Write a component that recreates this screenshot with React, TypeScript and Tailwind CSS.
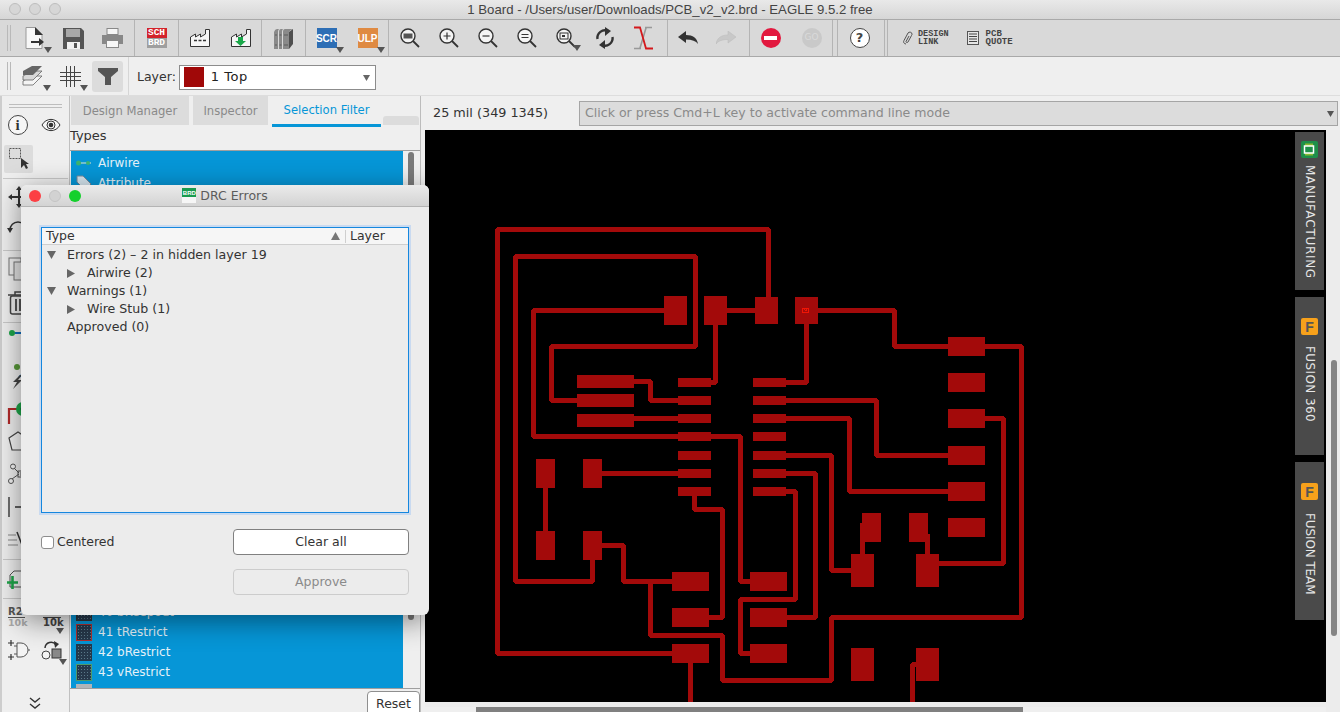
import React from "react";

const RED = "#a30a0a";
const wires = [
  "768.5,297 768.5,229.5 497.5,229.5 497.5,653.5 672,653.5",
  "577,400.5 551.5,400.5 551.5,346.5 695.5,346.5 695.5,256.5 515.5,256.5 515.5,581.5 592.5,581.5 592.5,560",
  "664,310.5 533.5,310.5 533.5,436.5 740.5,436.5 740.5,581.5 750,581.5",
  "727,310.5 755,310.5",
  "715.5,325 715.5,382.5 711,382.5",
  "818,310.5 894.5,310.5 894.5,346.5 1021.5,346.5 1021.5,617.5 831.5,617.5 831.5,680.5 722.5,680.5 722.5,635.5 650.5,635.5 650.5,581.5",
  "806.5,324 806.5,382.5 786,382.5",
  "786,400.5 876.5,400.5 876.5,455.5 948,455.5",
  "786,418.5 849.5,418.5 849.5,491.5 948,491.5",
  "786,455.5 831.5,455.5 831.5,570.5 851,570.5",
  "786,473.5 815.5,473.5 815.5,617.5 787,617.5",
  "786,491.5 795.5,491.5 795.5,599.5 740.5,599.5 740.5,653.5 750,653.5",
  "985,418.5 1003.5,418.5 1003.5,563.5 939,563.5",
  "862.5,525 862.5,554",
  "927.5,536 927.5,554",
  "912.5,702 912.5,664.5 920,664.5",
  "545.5,488 545.5,531",
  "602,473.5 678,473.5",
  "602,545.5 623.5,545.5 623.5,581.5 672,581.5",
  "694.5,496 694.5,509.5 722.5,509.5 722.5,617.5 709,617.5",
  "690.5,663 690.5,702",
  "634,381.5 650.5,381.5 650.5,400.5 678,400.5",
  "634,418.5 678,418.5",
];
// x1, y1, x2, y2
const pads: number[][] = [
  [664, 296, 687, 325], [704, 296, 727, 325], [755, 297, 778, 324], [795, 297, 818, 324],
  [577, 375, 634, 388], [577, 394, 634, 407], [577, 414, 634, 427],
  ...[378, 396, 414, 432, 451, 469, 487].flatMap((y) => [[678, y, 711, y + 9], [753, y, 786, y + 9]]),
  [536, 459, 555, 488], [583, 459, 602, 488], [536, 531, 555, 560], [583, 531, 602, 560],
  [672, 572, 709, 591], [672, 608, 709, 627], [672, 644, 709, 663],
  [750, 572, 787, 591], [750, 608, 787, 627], [750, 644, 787, 663],
  ...[337, 373, 409, 446, 482, 518].map((y) => [948, y, 985, y + 19]),
  [862, 513, 881, 542], [909, 513, 928, 542],
  [851, 554, 874, 587], [916, 554, 939, 587], [851, 648, 874, 681], [916, 648, 939, 681],
];

function Board() {
  return (
    <svg width="901" height="572" viewBox="425 130 901 572" className="block" shapeRendering="crispEdges">
      {wires.map((p, i) => (
        <polyline key={i} points={p} fill="none" stroke={RED} strokeWidth="5" strokeLinejoin="bevel" strokeLinecap="square" />
      ))}
      {pads.map(([a, b, c, d], i) => (
        <rect key={i} x={a} y={b} width={c - a} height={d - b} fill={RED} />
      ))}
      <rect x="802.5" y="308.5" width="6" height="4" fill="none" stroke="#f01505" strokeWidth="1" />
      <path d="M804 309l2 2 1-2" fill="none" stroke="#f01505" strokeWidth="1" />
    </svg>
  );
}

const Tri = ({ className = "" }: { className?: string }) => (
  <svg width="8" height="6" viewBox="0 0 8 6" className={"absolute " + className}>
    <path d="M0 0h8L4 6z" fill="#555" />
  </svg>
);

const Sep = () => <div className="w-px self-stretch bg-[#b4b4b4]" />;
const Grip = () => (
  <div className="flex gap-[2px] self-stretch py-[5px]">
    <div className="w-px bg-[#b9b9b9]" />
    <div className="w-px bg-[#b9b9b9]" />
  </div>
);

function Btn({ w, children }: { w: number; children: React.ReactNode }) {
  return (
    <div className="relative flex h-full shrink-0 items-center justify-center" style={{ width: w }}>
      {children}
    </div>
  );
}

const Mag = ({ children, tri }: { children?: React.ReactNode; tri?: boolean }) => (
  <>
    <svg width="22" height="22" viewBox="0 0 22 22" className="mr-[2px]">
      <circle cx="9" cy="9" r="7" fill="#f4f4f4" stroke="#333" strokeWidth="1.4" />
      <path d="M14 14l6 6" stroke="#333" strokeWidth="1.8" />
      {children}
    </svg>
    {tri && <Tri className="right-[5px] bottom-[5px]" />}
  </>
);

const Factory = ({ arrow }: { arrow?: boolean }) => (
  <svg width="22" height="20" viewBox="0 0 22 20">
    <path d="M1.5 18.5V9l5 -3v3l5 -3v3l5-3V1.500h4v17z" fill="#f6f6f6" stroke="#333" strokeWidth="1" />
    {arrow ? (
      <path d="M8 9h5v4h3l-5.500 5L5 13h3z" fill="#1aa84a" />
    ) : (
      <path d="M5 12.500h3M9.500 12.500h3M14 12.500h3" stroke="#333" strokeWidth="1.500" />
    )}
  </svg>
);

function TopToolbar() {
  return (
    <div className="flex h-[38px] items-stretch border-y border-[#a9a9a9] bg-[#d9d9d9] pl-[7px]">
      <Grip />
      <div className="w-[4px]" />
      <Btn w={39}>
        <svg width="24" height="24" viewBox="0 0 24 24">
          <path d="M3 1.500h9l7 7V22.500H3z" fill="#f7f7f7" stroke="#999" />
          <path d="M12 1v8h8z" fill="#333" />
          <path d="M8 15h8v-3l5 4-5 4v-3H8z" fill="#333" />
        </svg>
        <Tri className="right-[2px] bottom-[3px]" />
      </Btn>
      <Btn w={39}>
        <svg width="21" height="21" viewBox="0 0 21 21">
          <path d="M0 0h18l3 3v18H0z" fill="#555" />
          <rect x="3" y="1" width="14" height="8" fill="#a8a8a8" />
          <rect x="4" y="14" width="13" height="7" fill="#f2f2f2" />
          <rect x="11" y="15" width="3" height="5" fill="#555" />
        </svg>
      </Btn>
      <Btn w={39}>
        <svg width="21" height="20" viewBox="0 0 21 20">
          <rect x="5" y="0.500" width="11" height="6" fill="#f6f6f6" stroke="#888" />
          <path d="M0 7h21v9h-4v-3H4v3H0z" fill="#888" />
          <rect x="4.500" y="12.500" width="12" height="7" fill="#f6f6f6" stroke="#888" />
        </svg>
      </Btn>
      <div className="w-[2px]" />
      <Sep />
      <Btn w={43}>
        <div className="flex h-[20px] w-[20px] flex-col text-center font-['Liberation_Mono',monospace] text-[9.5px] leading-[10px] font-bold text-white">
          <span className="bg-[#d3232b]">SCH</span>
          <span className="bg-[#9f9f9f]">BRD</span>
        </div>
      </Btn>
      <Sep />
      <Btn w={41}>
        <Factory />
      </Btn>
      <Btn w={41}>
        <Factory arrow />
      </Btn>
      <Sep />
      <Btn w={43}>
        <svg width="19" height="21" viewBox="0 0 19 21">
          <path d="M0 4q1-3 3-3h2q-1 1-1 3v17H0zM5 4q0-3 2-3h2q-1 1-1 3v17H5zM9 4q0-3 2-3h8q-3 1-4 3v17H9z" fill="#8a8a8a" />
          <path d="M15 4l4-3v15l-4 5z" fill="#4f4f4f" />
          <path d="M1 7h2M1 17h2M5.500 7h2M5.500 17h2M10 7h4M10 17h4" stroke="#5c5c5c" strokeWidth="1" />
        </svg>
      </Btn>
      <Sep />
      <Btn w={41}>
        <div className="flex h-[20px] w-[20px] items-center justify-center bg-[#2d6eb5] font-['Liberation_Sans',sans-serif] text-[10px] font-bold text-white">
          SCR
        </div>
        <Tri className="right-[3px] bottom-[3px]" />
      </Btn>
      <Btn w={41}>
        <div className="flex h-[20px] w-[20px] items-center justify-center bg-[#df8a42] font-['Liberation_Sans',sans-serif] text-[10px] font-bold text-white">
          ULP
        </div>
        <Tri className="right-[3px] bottom-[3px]" />
      </Btn>
      <Sep />
      <div className="w-[2px]" />
      <Btn w={39}>
        <Mag>
          <rect x="4.500" y="6.500" width="9" height="5" fill="#555" />
        </Mag>
      </Btn>
      <Btn w={39}>
        <Mag>
          <path d="M5.500 9h7M9 5.500v7" stroke="#333" strokeWidth="1.200" />
        </Mag>
      </Btn>
      <Btn w={39}>
        <Mag>
          <path d="M5.500 9h7" stroke="#333" strokeWidth="1.200" />
        </Mag>
      </Btn>
      <Btn w={39}>
        <Mag>
          <path d="M5.500 7.500h7M5.500 10.500h7" stroke="#333" strokeWidth="1.200" />
        </Mag>
      </Btn>
      <Btn w={39}>
        <Mag tri>
          <rect x="5" y="6" width="8" height="6" fill="#f4f4f4" stroke="#333" />
          <rect x="7" y="8" width="3" height="2" fill="#333" />
        </Mag>
      </Btn>
      <Btn w={38}>
        <svg width="20" height="22" viewBox="0 0 20 22">
          <path d="M2.500 12A7.500 7.500 0 0 1 13 4" fill="none" stroke="#333" strokeWidth="2.400" />
          <path d="M10 0l6 4-6 5z" fill="#333" />
          <path d="M17.500 10A7.500 7.500 0 0 1 7 18" fill="none" stroke="#333" strokeWidth="2.400" />
          <path d="M10 22l-6-4 6-5z" fill="#333" />
        </svg>
      </Btn>
      <Btn w={38}>
        <svg width="20" height="24" viewBox="0 0 20 24">
          <path d="M12 1.500h7M1 22.500h7M13 2L7 22" fill="none" stroke="#999" strokeWidth="1.600" />
          <path d="M1 1.500h6L13 22.500h7" fill="none" stroke="#d4181c" strokeWidth="1.800" />
        </svg>
      </Btn>
      <div className="w-[5px]" />
      <Sep />
      <Btn w={39}>
        <svg width="20" height="14" viewBox="0 0 20 14">
          <path d="M0 6l8-6v4c7 0 11 3 12 9-2-3-6-4.500-12-4.500V12z" fill="#333" />
        </svg>
      </Btn>
      <Btn w={37}>
        <svg width="20" height="14" viewBox="0 0 20 14">
          <path d="M20 6l-8-6v4C5 4 1 7 0 13c2-3 6-4.500 12-4.500V12z" fill="#c8c8c8" stroke="#bbb" strokeWidth="0.500" />
        </svg>
      </Btn>
      <div className="w-[5px]" />
      <Sep />
      <Btn w={41}>
        <div className="flex h-[20px] w-[20px] items-center justify-center rounded-full bg-[#e2193f]">
          <div className="h-[4px] w-[13px] bg-white" />
        </div>
      </Btn>
      <Btn w={41}>
        <div className="flex h-[20px] w-[20px] items-center justify-center rounded-full bg-[#c9c9c9] text-[9px] text-[#dadada]">GO</div>
      </Btn>
      <Sep />
      <div className="w-[4px]" />
      <Sep />
      <Btn w={43}>
        <div className="flex h-[20px] w-[20px] items-center justify-center rounded-full border border-[#444] bg-white text-[13px] font-bold text-[#444]">?</div>
      </Btn>
      <div className="w-[3px]" />
      <Sep />
      <div className="w-[2px]" />
      <Sep />
      <div className="flex items-center pl-[14px]">
        <svg width="12" height="14" viewBox="0 0 12 14" className="mr-[4px]">
          <path d="M4 13c-2 0-3-2-2-3.500L6 2c1-1.500 4-1 4 1 0 .6 0 1-.5 1.500L6 11c-1 1-2 .5-2-.5L7 5" fill="none" stroke="#444" strokeWidth="0.900" />
        </svg>
        <div className="font-['Liberation_Mono',monospace] text-[8.5px] leading-[8px] font-bold text-[#444]">
          <div>DESIGN</div>
          <div>LINK</div>
        </div>
      </div>
      <div className="flex items-center pl-[18px]">
        <svg width="12" height="14" viewBox="0 0 12 14" className="mr-[7px]">
          <rect x="0.500" y="0.500" width="11" height="13" fill="#e6e6e6" stroke="#555" />
          <path d="M2 3h8M2 5.500h8M2 8h8M2 10.500h8" stroke="#444" strokeWidth="1" />
        </svg>
        <div className="font-['Liberation_Mono',monospace] text-[9px] leading-[8px] font-bold text-[#444]">
          <div>PCB</div>
          <div>QUOTE</div>
        </div>
      </div>
    </div>
  );
}

function SecondToolbar() {
  return (
    <div className="flex h-[39px] items-stretch border-b border-[#dddddd] bg-[#efefef] pl-[7px]">
      <Grip />
      <div className="w-[8px]" />
      <Btn w={28}>
        <svg width="22" height="22" viewBox="0 0 22 22">
          <path d="M1 16l9-5h10l-9 9H1z" fill="#f4f4f4" stroke="#666" strokeWidth="0.800" />
          <path d="M1 11l9-5h10l-9 9H1z" fill="#d8d8d8" stroke="#666" strokeWidth="0.800" />
          <path d="M1 6l9-5h10l-9 9H1z" fill="#666" />
        </svg>
        <Tri className="right-[-4px] bottom-[4px]" />
      </Btn>
      <div className="w-[9px]" />
      <Btn w={28}>
        <svg width="21" height="21" viewBox="0 0 21 21">
          <path d="M0 6.500h21M0 10.500h21M0 14.500h21M6.500 0v21M10.500 0v21M14.500 0v21" stroke="#444" strokeWidth="1" />
        </svg>
        <Tri className="right-[-4px] bottom-[4px]" />
      </Btn>
      <div className="w-[8px] shrink-0" />
      <div className="flex w-[31px] items-center justify-center self-center">
        <div className="flex h-[31px] w-[31px] items-center justify-center rounded-[3px] bg-[#dcdcdc]">
          <svg width="20" height="17" viewBox="0 0 20 17">
            <path d="M0 0h20v3l-7 6v8H7V9L0 3z" fill="#555" />
          </svg>
        </div>
      </div>
      <div className="w-[5px]" />
      <div className="w-px self-stretch bg-[#d6d6d6]" />
      <div className="flex items-center pt-[2px] pl-[8px]">
        <span className="text-[12.5px] font-medium text-[#333]">Layer:</span>
        <div className="relative ml-[3px] flex h-[25px] w-[197px] items-center border border-[#8c8c8c] bg-white pl-[4px]">
          <div className="h-[20px] w-[20px] bg-[#a00808]" />
          <span className="ml-[7px] text-[13px] tracking-[0.5px] text-[#222]">1 Top</span>
          <svg width="7" height="6" viewBox="0 0 7 6" className="absolute top-[9px] right-[5px]">
            <path d="M0 0h7L3.500 6z" fill="#666" />
          </svg>
        </div>
      </div>
    </div>
  );
}

function ToolRow({ h, children }: { h: number; children: React.ReactNode }) {
  return (
    <div className="flex items-center" style={{ height: h }}>
      {children}
    </div>
  );
}
const Cell = ({ children }: { children?: React.ReactNode }) => (
  <div className="relative flex h-full w-[33px] items-center justify-center">{children}</div>
);
const Rule = () => <div className="mx-[1px] h-px bg-[#c8c8c8]" />;

function ToolStrip() {
  return (
    <div className="flex w-[70px] shrink-0 flex-col border-r border-l-2 border-r-[#c0c0c0] border-l-[#cdcdcd] bg-[#efefef]">
      <div className="h-[8px]" />
      <div className="mx-[7px] h-[4px] border-y border-[#bdbdbd]" />
      <ToolRow h={34}>
        <Cell>
          <div className="mr-[2px] flex h-[20px] w-[20px] items-center justify-center rounded-full border border-[#444] bg-[#f6f6f6] font-['Liberation_Serif',serif] text-[15px] font-bold text-[#333]">i</div>
        </Cell>
        <Cell>
          <svg width="20" height="14" viewBox="0 0 20 14" className="mr-[2px]">
            <path d="M1 7c4-7.500 14-7.500 18 0-4 7.500-14 7.500-18 0z" fill="#f6f6f6" stroke="#333" />
            <circle cx="10" cy="7" r="4" fill="none" stroke="#333" />
            <circle cx="10" cy="7" r="2.300" fill="#333" />
          </svg>
        </Cell>
      </ToolRow>
      <div className="h-[3px]" />
      <div className="flex h-[28px] items-center pl-[2px]">
        <div className="flex h-[28px] w-[29px] items-center justify-center rounded-[2px] bg-[#dcdcdc]">
          <svg width="20" height="22" viewBox="0 0 20 22">
            <rect x="0.500" y="0.500" width="11" height="10" fill="none" stroke="#555" strokeDasharray="2 1" />
            <path d="M12 10v10l3-3 2 4 2-1-2-4h3z" fill="#333" />
          </svg>
        </div>
      </div>
      <div className="h-[5px]" />
      <Rule />
      <ToolRow h={36}>
        <Cell>
          <svg width="24" height="24" viewBox="0 0 24 24">
            <path d="M12 1l3 4h-2v6h6V9l4 3-4 3v-2h-6v6h2l-3 4-3-4h2v-6H5v2l-4-3 4-3v2h6V5H9z" fill="#333" />
          </svg>
        </Cell>
      </ToolRow>
      <ToolRow h={30}>
        <Cell>
          <svg width="24" height="20" viewBox="0 0 24 20">
            <path d="M3 10a8 8 0 0 1 16 0v8" fill="none" stroke="#333" strokeWidth="1.500" />
            <path d="M0 8h6l-3 5z" fill="#333" />
          </svg>
        </Cell>
      </ToolRow>
      <div className="h-[5px]" />
      <Rule />
      <ToolRow h={36}>
        <Cell>
          <svg width="22" height="24" viewBox="0 0 22 24">
            <rect x="1" y="1" width="12" height="17" fill="#f0f0f0" stroke="#777" />
            <rect x="6" y="5" width="13" height="18" fill="#e4e4e4" stroke="#777" />
          </svg>
        </Cell>
      </ToolRow>
      <ToolRow h={32}>
        <Cell>
          <svg width="22" height="24" viewBox="0 0 22 24">
            <path d="M0 4h22M7 4V1h8v3" fill="none" stroke="#444" strokeWidth="1.500" />
            <rect x="2.500" y="5" width="17" height="18" rx="2" fill="#eee" stroke="#444" strokeWidth="1.500" />
            <path d="M8 8v12M12 8v12M16 8v12" stroke="#444" strokeWidth="1.800" />
          </svg>
        </Cell>
      </ToolRow>
      <div className="h-[3px]" />
      <Rule />
      <ToolRow h={30}>
        <Cell>
          <svg width="24" height="20" viewBox="0 0 24 20">
            <circle cx="5" cy="5" r="3" fill="#1ea64a" />
            <path d="M8 5h10v14" fill="none" stroke="#0f6fc0" strokeWidth="2" />
          </svg>
        </Cell>
      </ToolRow>
      <ToolRow h={48}>
        <Cell>
          <svg width="24" height="28" viewBox="0 0 24 28">
            <circle cx="10" cy="4" r="3" fill="#5a9a3a" />
            <path d="M12 14l8-6" stroke="#0f6fc0" strokeWidth="2" strokeDasharray="3 1" />
            <path d="M13 12l-7 7h4l-4 7 9-9h-4l4-5z" fill="#444" />
          </svg>
        </Cell>
      </ToolRow>
      <ToolRow h={24}>
        <Cell>
          <svg width="26" height="24" viewBox="0 0 26 24">
            <path d="M3 23V8h8" fill="none" stroke="#b22a2a" strokeWidth="2.200" />
            <circle cx="17" cy="8" r="7" fill="#1ea64a" />
            <circle cx="17" cy="8" r="2.500" fill="#0a5a2a" />
          </svg>
        </Cell>
      </ToolRow>
      <ToolRow h={32}>
        <Cell>
          <svg width="24" height="20" viewBox="0 0 24 20">
            <path d="M2 7l9-6 9 6-3 12H5z" fill="#f4f4f4" stroke="#444" strokeWidth="1.200" />
          </svg>
        </Cell>
      </ToolRow>
      <ToolRow h={34}>
        <Cell>
          <svg width="24" height="22" viewBox="0 0 24 22">
            <circle cx="6" cy="3.500" r="2.500" fill="#f4f4f4" stroke="#555" />
            <circle cx="4" cy="18" r="2.500" fill="#f4f4f4" stroke="#555" />
            <path d="M7 5l5 5M5 16l7-5M14 9v4" stroke="#555" />
            <rect x="11" y="8" width="8" height="6" fill="none" stroke="#555" />
          </svg>
        </Cell>
      </ToolRow>
      <ToolRow h={32}>
        <Cell>
          <svg width="24" height="20" viewBox="0 0 24 20">
            <path d="M2 0v20" stroke="#444" strokeWidth="1.500" />
            <path d="M8 10h10" stroke="#333" strokeWidth="1.500" />
            <path d="M14 6l6 4-6 4z" fill="#333" />
          </svg>
        </Cell>
      </ToolRow>
      <ToolRow h={36}>
        <Cell>
          <svg width="24" height="20" viewBox="0 0 24 20">
            <path d="M1 4h8M1 9h9M1 14h10" stroke="#aaa" strokeWidth="1.500" />
            <path d="M10 1l7 18" stroke="#333" strokeWidth="1.500" />
          </svg>
        </Cell>
      </ToolRow>
      <Rule />
      <ToolRow h={38}>
        <Cell>
          <svg width="24" height="22" viewBox="0 0 24 22">
            <path d="M3 7l4-4h15v16H3z" fill="#efefef" stroke="#555" />
            <path d="M5.500 8v13M0 14.500h11" stroke="#1ea64a" strokeWidth="2.600" />
          </svg>
        </Cell>
      </ToolRow>
      <Rule />
      <div className="flex h-[30px] items-start pt-[8px]">
        <div className="w-[33px] text-[9.500px] leading-[10px] font-bold text-[#555]">
          <div className="pl-[6px]">
            <div className="w-[17px] border-b border-[#555] text-[10px]">R2</div>
            <div className="text-[#aaa]">10k</div>
          </div>
        </div>
        <div className="relative w-[33px] pl-[8px] text-[10px] leading-[10px] font-bold text-[#444]">
          <div className="h-[11px] w-[18px] border-b border-[#444]" />
          <div>10k</div>
          <Tri className="right-[4px] bottom-[-6px]" />
        </div>
      </div>
      <ToolRow h={42}>
        <Cell>
          <svg width="22" height="20" viewBox="0 0 22 20">
            <path d="M0 3h6M3 0v6M0 17h6M3 14v6" stroke="#333" strokeWidth="1.200" />
            <path d="M9 3h4a7 7 0 0 1 0 14H9z" fill="#f4f4f4" stroke="#555" />
            <path d="M6 6h3M6 14h3M20 10h2" stroke="#555" />
          </svg>
        </Cell>
        <Cell>
          <svg width="22" height="22" viewBox="0 0 22 22">
            <path d="M4 9A6 6 0 0 1 15 6" fill="none" stroke="#333" strokeWidth="1.500" />
            <path d="M13 2l5 3-4 4z" fill="#333" />
            <circle cx="5" cy="16" r="4" fill="#f4f4f4" stroke="#444" />
            <rect x="11" y="10" width="9" height="9" fill="#888" stroke="#333" />
          </svg>
          <Tri className="right-[1px] bottom-[6px]" />
        </Cell>
      </ToolRow>
      <div className="flex-1" />
      <div className="flex justify-center pr-[2px] pb-[3px]">
        <svg width="14" height="12" viewBox="0 0 14 12">
          <path d="M2 1l5 4 5-4M2 7l5 4 5-4" fill="none" stroke="#333" strokeWidth="1.400" />
        </svg>
      </div>
    </div>
  );
}

function Swatch({ border, bg }: { border: string; bg: string }) {
  return (
    <div
      className="mr-[6px] h-[17px] w-[16px] shrink-0 border"
      style={{
        borderColor: border,
        backgroundColor: bg,
        backgroundImage: "radial-gradient(#5a7a8a 0.600px, transparent 0.800px)",
        backgroundSize: "3px 3px",
      }}
    />
  );
}

function ListRow({ icon, label }: { icon: React.ReactNode; label: string }) {
  return (
    <div className="flex h-[20px] shrink-0 items-center pl-[5px] text-[12px] whitespace-nowrap text-[#e4f1f8]">
      {icon}
      <span>{label}</span>
    </div>
  );
}

function Sidebar() {
  return (
    <div className="flex w-[351px] shrink-0 flex-col border-r border-[#bcbcbc] bg-[#efefef]">
      <div className="flex h-[31px] items-start pl-[1px] text-[11.6px] font-medium text-[#8a8a8a]">
        <div className="flex h-[29px] w-[118px] items-center justify-center bg-[#dcdcdc] pt-[2px]">Design Manager</div>
        <div className="ml-[4px] flex h-[29px] w-[75px] items-center justify-center bg-[#dcdcdc] pt-[2px]">Inspector</div>
        <div className="ml-[4px] flex h-[31px] w-[109px] items-center justify-center border-b-[3px] border-[#0696d7] pt-[2px] text-[#0696d7]">Selection Filter</div>
        <div className="mt-[20px] ml-[2px] h-[9px] w-[36px] rounded-t-[3px] bg-[#dcdcdc]" />
      </div>
      <div className="flex h-[24px] items-start border-b border-[#9f9f9f] text-[13px] leading-[17px] text-[#333]">Types</div>
      <div className="flex min-h-0 flex-1">
        <div className="ml-px flex min-h-0 w-[332px] flex-col justify-between overflow-hidden bg-[#0696d7]">
          <div className="pt-[2px]">
            <ListRow
              icon={
                <svg width="16" height="6" viewBox="0 0 16 6" className="mr-[6px] shrink-0">
                  <path d="M2 3h13" stroke="#9cc" strokeWidth="1.500" />
                  <circle cx="2.500" cy="3" r="2.500" fill="#3cb371" />
                  <circle cx="12" cy="3" r="2" fill="#3cb371" />
                </svg>
              }
              label="Airwire"
            />
            <ListRow
              icon={
                <svg width="16" height="16" viewBox="0 0 16 16" className="mr-[6px] shrink-0">
                  <path d="M1 1h6l8 8-6 6-8-8z" fill="#d6e6ef" stroke="#789" />
                </svg>
              }
              label="Attribute"
            />
          </div>
          <div className="mb-[-14px]">
            <ListRow icon={<Swatch border="#333" bg="#26384a" />} label="40 bKeepout" />
            <ListRow icon={<Swatch border="#b03030" bg="#26384a" />} label="41 tRestrict" />
            <ListRow icon={<Swatch border="#26384a" bg="#26384a" />} label="42 bRestrict" />
            <ListRow icon={<Swatch border="#4f9a6a" bg="#26384a" />} label="43 vRestrict" />
            <ListRow icon={<div className="mr-[6px] h-[17px] w-[16px] shrink-0 bg-[#b0b4b8]" />} label="" />
          </div>
        </div>
        <div className="w-[16px] pt-px">
          <div className="ml-[5px] h-[468px] w-[6px] rounded-[3px] bg-[#7a7a7a]" />
        </div>
      </div>
      <div className="flex h-[24px] justify-end border-t border-[#9f9f9f] pt-[2px]">
        <div className="flex h-[24px] w-[53px] items-center justify-center rounded-t-[4px] border border-[#8f8f8f] bg-white pt-[2px] text-[12.500px] font-medium text-[#333]">Reset</div>
      </div>
    </div>
  );
}

function VerticalTab({ children, icon, h, pt, gap, track }: { children: string; icon: React.ReactNode; h: number; pt: number; gap: number; track: number }) {
  return (
    <div className="flex w-[29px] flex-col items-center bg-[#4a4a4a]" style={{ height: h, paddingTop: pt }}>
      {icon}
      <div className="text-[12px] text-[#e6e6e6] [writing-mode:vertical-rl]" style={{ marginTop: gap, letterSpacing: track }}>
        {children}
      </div>
    </div>
  );
}

const FIcon = () => (
  <div className="flex h-[17px] w-[17px] items-center justify-center rounded-[2px] bg-[#f7a11b] font-['Liberation_Sans',sans-serif] text-[14px] leading-none font-bold text-[#555]">F</div>
);

function RightArea() {
  return (
    <div className="flex min-w-0 flex-1 flex-col pl-[4px]">
      <div className="flex h-[34px] shrink-0 items-center">
        <span className="ml-[8px] w-[146px] text-[12.8px] font-medium whitespace-nowrap text-[#333]">25 mil (349 1345)</span>
        <div className="relative flex h-[25px] w-[759px] items-center border border-[#a5a5a5] bg-[#dcdcdc] pl-[5px] text-[12.55px] text-[#8a8a8a]">
          Click or press Cmd+L key to activate command line mode
          <svg width="7" height="6" viewBox="0 0 7 6" className="absolute top-[9px] right-[3px]">
            <path d="M0 0h7L3.500 6z" fill="#555" />
          </svg>
        </div>
      </div>
      <div className="flex flex-1">
        <div className="w-[901px]">
          <div className="relative h-[572px] bg-black">
            <Board />
            <div className="absolute top-[2px] right-[2px] flex flex-col gap-[7px]">
              <VerticalTab
                h={158}
                pt={9}
                gap={7}
                track={0.7}
                icon={
                  <svg width="17" height="17" viewBox="0 0 17 17">
                    <rect width="17" height="17" rx="2" fill="#1e8f4a" />
                    <path d="M5 2.500v12M7 2.500v12M9 2.500v12M11 2.500v12" stroke="#f2e31b" strokeWidth="1" />
                    <rect x="3.500" y="5" width="9" height="7" fill="#1e8f4a" stroke="#fff" strokeWidth="1.500" />
                  </svg>
                }
              >
                MANUFACTURING
              </VerticalTab>
              <VerticalTab h={158} pt={21} gap={11} track={0.4} icon={<FIcon />}>
                FUSION 360
              </VerticalTab>
              <VerticalTab h={158} pt={21} gap={13} track={-0.1} icon={<FIcon />}>
                FUSION TEAM
              </VerticalTab>
            </div>
          </div>
          <div className="h-[5px] bg-[#ececec]" />
          <div className="ml-[51px] h-[5px] w-[547px] bg-[#808080]" />
        </div>
        <div className="w-[14px] bg-[#ececec] pt-[230px] pl-[5px]">
          <div className="h-[276px] w-[6px] rounded-[3px] bg-[#858585]" />
        </div>
      </div>
    </div>
  );
}

const Down = () => (
  <svg width="9" height="8" viewBox="0 0 9 8" className="shrink-0">
    <path d="M0 0h9L4.500 8z" fill="#666" />
  </svg>
);
const Right = () => (
  <svg width="8" height="9" viewBox="0 0 8 9" className="shrink-0">
    <path d="M0 0l8 4.500L0 9z" fill="#666" />
  </svg>
);

function TreeRow({ level, kind, children }: { level: number; kind?: "down" | "right"; children: string }) {
  return (
    <div className="flex h-[18px] items-center text-[12.6px] text-[#333]">
      <div className="flex w-[25px] shrink-0 pl-[5px]" style={{ marginLeft: level * 20 }}>
        {kind === "down" ? <Down /> : kind === "right" ? <Right /> : null}
      </div>
      <span className="whitespace-nowrap">{children}</span>
    </div>
  );
}

function Dialog() {
  return (
    <div className="absolute top-[185px] left-[21px] flex h-[430px] w-[408px] flex-col overflow-hidden rounded-[6px] bg-[#ececec] shadow-[0_6px_28px_rgba(0,0,0,0.45)]">
      <div className="relative flex h-[22px] shrink-0 items-center justify-center border-b border-[#b4b4b4] bg-gradient-to-b from-[#ebebeb] to-[#d3d3d3]">
        <div className="absolute top-[5px] left-[8px] flex gap-[8px]">
          <div className="h-[12px] w-[12px] rounded-full bg-[#fc3f44]" />
          <div className="h-[12px] w-[12px] rounded-full border border-[#c4c4c4] bg-[#d2d2d2]" />
          <div className="h-[12px] w-[12px] rounded-full bg-[#14d02c]" />
        </div>
        <div className="mr-[4px] flex h-[15px] w-[14px] flex-col bg-[#f6f6f6]">
          <div className="flex h-[9px] items-center justify-center bg-[#199b4f] font-['Liberation_Sans',sans-serif] text-[6px] leading-none font-bold text-white">BRD</div>
        </div>
        <span className="pt-[1px] text-[12.500px] text-[#5c5c5c]">DRC Errors</span>
      </div>
      <div className="flex flex-1 flex-col px-[20px] pt-[20px]">
        <div className="flex h-[286px] flex-col border border-[#1587de] shadow-[0_0_0_2px_#c9daf0]">
          <div className="flex h-[17px] shrink-0 items-center border-b border-[#cfcfcf] bg-[#f6f6f6] text-[12.500px] text-[#333]">
            <span className="flex-1 pl-[4px]">Type</span>
            <svg width="9" height="8" viewBox="0 0 9 8" className="mr-[5px]">
              <path d="M0 8h9L4.500 0z" fill="#777" />
            </svg>
            <div className="h-[13px] w-px bg-[#cfcfcf]" />
            <span className="w-[62px] pl-[4px]">Layer</span>
          </div>
          <div className="pt-[1px]">
            <TreeRow level={0} kind="down">
              Errors (2) – 2 in hidden layer 19
            </TreeRow>
            <TreeRow level={1} kind="right">
              Airwire (2)
            </TreeRow>
            <TreeRow level={0} kind="down">
              Warnings (1)
            </TreeRow>
            <TreeRow level={1} kind="right">
              Wire Stub (1)
            </TreeRow>
            <TreeRow level={0}>Approved (0)</TreeRow>
          </div>
        </div>
        <div className="mt-[16px] flex items-center justify-between">
          <div className="flex items-center pt-[1px] text-[12.500px] text-[#333]">
            <div className="mr-[3px] h-[13px] w-[13px] rounded-[3px] border border-[#8d8d8d] bg-white" />
            Centered
          </div>
          <div className="flex h-[26px] w-[176px] items-center justify-center rounded-[4px] border border-[#808080] bg-white pt-[1px] text-[12.500px] font-medium text-[#333]">Clear all</div>
        </div>
        <div className="mt-[14px] flex justify-end">
          <div className="flex h-[26px] w-[176px] items-center justify-center rounded-[4px] border border-[#cccccc] bg-[#ececec] pt-[1px] text-[12.500px] font-medium text-[#8a8a8a]">Approve</div>
        </div>
      </div>
    </div>
  );
}

export default function App() {
  return (
    <div className="relative flex h-[712px] w-[1340px] flex-col overflow-hidden bg-[#efefef] font-['DejaVu_Sans',sans-serif]">
      <div className="relative flex h-[19px] shrink-0 items-center justify-center bg-gradient-to-b from-[#e9e9e9] to-[#d6d6d6] font-['Liberation_Sans',sans-serif] text-[13.2px] text-[#444]">
        <div className="absolute top-[3px] left-[9px] flex gap-[8px]">
          <div className="h-[12px] w-[12px] rounded-full border border-[#bdbdbd] bg-[#d6d6d6]" />
          <div className="h-[12px] w-[12px] rounded-full border border-[#bdbdbd] bg-[#d6d6d6]" />
          <div className="h-[12px] w-[12px] rounded-full border border-[#bdbdbd] bg-[#d6d6d6]" />
        </div>
        1 Board - /Users/user/Downloads/PCB_v2_v2.brd - EAGLE 9.5.2 free
      </div>
      <TopToolbar />
      <SecondToolbar />
      <div className="flex min-h-0 flex-1">
        <ToolStrip />
        <Sidebar />
        <RightArea />
      </div>
      <Dialog />
    </div>
  );
}
